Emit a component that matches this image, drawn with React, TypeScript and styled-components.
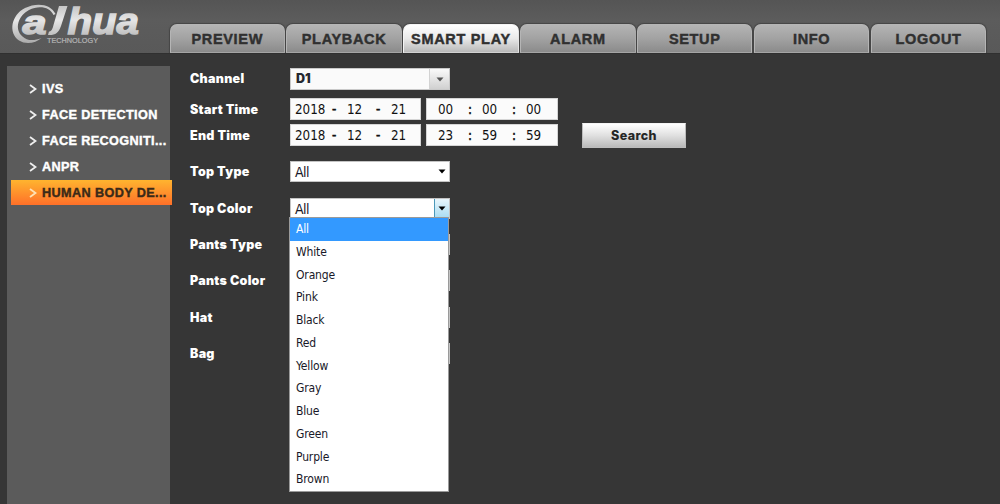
import React from 'react';
import styled, { createGlobalStyle, css } from 'styled-components';

const GlobalStyle = createGlobalStyle`
  * { box-sizing: border-box; }
  body { margin: 0; background: #363636; overflow: hidden; }
`;

const uiFont = css`font-family: 'DejaVu Sans Condensed', 'DejaVu Sans', sans-serif; font-stretch: condensed;`;
const heavyFont = css`font-family: Inter, 'Liberation Sans', sans-serif; font-weight: 900;`;
const boldFont = css`font-family: 'Liberation Sans', sans-serif; font-weight: 700;`;

const Page = styled.div`width: 1000px; height: 504px; overflow: hidden; background: #363636;`;

const Header = styled.header`
  height: 53px;
  display: flex;
  align-items: flex-end;
  background: linear-gradient(#555 0, #5c5c5c 20px, #595959 100%);
`;
const LogoBox = styled.div`width: 169.5px; height: 53px; flex: none;`;
const Tabs = styled.nav`display: flex; gap: 1.5px;`;
const Tab = styled.a<{ $active?: boolean }>`
  ${boldFont}
  width: 115.4px;
  height: 29px;
  padding-top: 1px;
  display: flex;
  align-items: center;
  justify-content: center;
  border-radius: 7px 7px 0 0;
  font-size: 14.5px;
  letter-spacing: 0.68px;
  white-space: nowrap;
  color: #303030;
  -webkit-text-stroke: 0.45px #303030;
  background: ${p => p.$active
    ? 'linear-gradient(#fff, #e9e9e9 50%, #b9b9b9)'
    : 'linear-gradient(#b4b4b4, #a2a2a2 50%, #8b8b8b)'};
  border: 1px solid ${p => (p.$active ? '#f4f4f4' : '#b5b5b5')};
  border-bottom-color: ${p => (p.$active ? '#d2d2d2' : '#a5a5a5')};
  box-shadow: 0 0 1px 1px #454545;
  clip-path: inset(-2px -2px 0 -2px);
`;

const Body = styled.div`display: flex; height: 451px; padding-left: 7px; box-shadow: inset 0 1px #303030;`;
const Sidebar = styled.aside`
  width: 163px;
  margin-top: 13px;
  padding: 10px 0 0 4px;
  flex: none;
  background: #5b5b5b;
`;
const SideItem = styled.div<{ $active?: boolean }>`
  ${boldFont}
  width: 161px;
  height: ${p => (p.$active ? 25 : 26)}px;
  padding: ${p => (p.$active ? 1 : 0)}px 0 0 18px;
  display: flex;
  align-items: center;
  font-size: 12.7px;
  letter-spacing: 0.36px;
  white-space: nowrap;
  color: ${p => (p.$active ? '#3b2a18' : '#fff')};
  -webkit-text-stroke: 0.4px currentColor;
  background: ${p => (p.$active ? 'linear-gradient(#ffb42f, #ff7029)' : 'none')};
  svg { flex: none; margin-right: 5px; }
`;

const Form = styled.main`padding: 14px 0 0 20px;`;
const Row = styled.div<{ $h: number }>`height: ${p => p.$h}px; display: flex; align-items: flex-start;`;
const Label = styled.label`
  ${heavyFont}
  width: 100px;
  padding-top: 1px;
  line-height: 22px;
  font-size: 12.5px;
  letter-spacing: 0.28px;
  color: #fff;
  white-space: nowrap;
`;
const ChannelSelect = styled.div`
  ${heavyFont}
  width: 160px;
  height: 22px;
  margin-top: 1px;
  display: flex;
  border: 1px solid #c9c9c9;
  background: #fafafa;
  color: #252830;
  font-size: 12.5px;
  line-height: 20px;
  padding-left: 5px;
  justify-content: space-between;
`;
const ChannelArrow = styled.span`
  width: 20px;
  display: flex;
  align-items: center;
  justify-content: center;
  border-left: 1px solid #d2d2d2;
  background: linear-gradient(#fafafa, #d0d0d0);
`;
const Field = styled.div<{ $time?: boolean }>`
  ${uiFont}
  width: ${p => (p.$time ? 132 : 131)}px;
  height: 22px;
  margin-right: 5px;
  padding-left: ${p => (p.$time ? 11 : 4)}px;
  display: flex;
  border: 1px solid #d5d5d5;
  background: #fbfbfb;
  color: #111;
  font-size: 13.3px;
  line-height: 22px;
`;
const Part = styled.span<{ $w: number }>`width: ${p => p.$w}px; flex: none;`;
const Separator = styled(Part)`-webkit-text-stroke: 0.5px currentColor;`;
const SearchButton = styled.button`
  ${heavyFont}
  width: 104px;
  height: 25px;
  margin: -1px 0 0 19px;
  padding: 0 0 1px;
  border: 1px solid #bcbcbc;
  border-top-color: #f4f4f4;
  background: linear-gradient(#fff, #e0e0e0 50%, #bababa);
  color: #262626;
  font-size: 12.5px;
  font-weight: 800;
  letter-spacing: 0.4px;
`;
const Select = styled.div`
  ${uiFont}
  position: relative;
  width: 160px;
  height: 21px;
  margin-top: 1px;
  padding-left: 4px;
  display: flex;
  justify-content: space-between;
  border: 1px solid #c4c4c4;
  background: #fff;
  color: #181828;
  font-size: 14px;
  letter-spacing: -0.5px;
  line-height: 20px;
`;
const Arrow = styled.span<{ $open?: boolean }>`
  width: 15px;
  margin-left: auto;
  display: flex;
  align-items: center;
  justify-content: center;
  ${p => p.$open && css`border-left: 1px solid #4b98b9; background: linear-gradient(#e9f6fc, #a8dcf2);`}
`;
const Menu = styled.ul`
  position: absolute;
  z-index: 2;
  top: 18px;
  left: -2px;
  width: 160px;
  height: 275px;
  margin: 0;
  padding: 0;
  border: 1px solid #9a9a9a;
  background: #fff;
  list-style: none;
`;
const Option = styled.li<{ $selected?: boolean }>`
  height: 22.75px;
  padding-left: 6px;
  line-height: 23.2px;
  font-size: 12px;
  letter-spacing: -0.15px;
  color: ${p => (p.$selected ? '#fff' : '#181828')};
  background: ${p => (p.$selected ? '#3399ff' : 'none')};
`;

const Chevron = ({ active }: { active?: boolean }) => (
  <svg width="8" height="10" viewBox="0 0 8 10">
    <path d="M1 1L6.5 5L1 9" fill="none" stroke={active ? '#ffe2b4' : '#eee'} strokeWidth="1.8" />
  </svg>
);
const Triangle = ({ color = '#000' }: { color?: string }) => (
  <svg width="8" height="5" viewBox="0 0 8 5"><path d="M0.5 0.5H7.5L4 4.5Z" fill={color} /></svg>
);

const Logo = () => (
  <svg width="169" height="53" viewBox="0 0 169 53">
    <defs>
      <linearGradient id="metal" gradientUnits="userSpaceOnUse" x1="0" y1="5" x2="0" y2="43">
        <stop offset="0" stopColor="#c4c4c4" />
        <stop offset="0.4" stopColor="#e6e6e6" />
        <stop offset="1" stopColor="#ababab" />
      </linearGradient>
    </defs>
    <path fill="url(#metal)" d="M55.5 14C51 4 37 2 25 8C11 15 8 33 19 40.5C26 45 36 43 41.5 38C34 41 27 41 22.5 36.5C14 29 18 16 29 10C39 5 50 7 53.5 15Z" />
    <path fill="url(#metal)" d="M59 6H67.5L61 26C58.500 33 55 35.5 48 35L49 31.5C51.5 31.5 52.5 29 53.5 25Z" />
    <g fill="url(#metal)" stroke="url(#metal)" strokeWidth="1.4" fontFamily="'Liberation Sans', sans-serif" fontWeight="700" fontStyle="italic">
      <text x="22.5" y="34" fontSize="34" textLength="24" lengthAdjust="spacingAndGlyphs">a</text>
      <text x="67.5" y="33.5" fontSize="36" textLength="71.5" lengthAdjust="spacingAndGlyphs">hua</text>
    </g>
    <text x="47" y="43" fontSize="7.2" fill="#b4b4b4" stroke="#b4b4b4" strokeWidth="0.2" fontFamily="'Liberation Sans', sans-serif" textLength="51" lengthAdjust="spacingAndGlyphs">TECHNOLOGY</text>
  </svg>
);

const tabs = ['PREVIEW', 'PLAYBACK', 'SMART PLAY', 'ALARM', 'SETUP', 'INFO', 'LOGOUT'];
const sections = ['IVS', 'FACE DETECTION', 'FACE RECOGNITI...', 'ANPR', 'HUMAN BODY DE...'];
const colors = ['All', 'White', 'Orange', 'Pink', 'Black', 'Red', 'Yellow', 'Gray', 'Blue', 'Green', 'Purple', 'Brown'];

const DateField = () => (
  <Field>
    <Part $w={37}>2018</Part><Separator $w={15}>-</Separator><Part $w={29}>12</Part><Separator $w={15}>-</Separator><Part $w={20}>21</Part>
  </Field>
);
const TimeField = ({ value }: { value: [string, string, string] }) => (
  <Field $time>
    <Part $w={30}>{value[0]}</Part><Separator $w={14}>:</Separator><Part $w={30}>{value[1]}</Part><Separator $w={14}>:</Separator><Part $w={20}>{value[2]}</Part>
  </Field>
);

export default function App() {
  return (
    <Page>
      <GlobalStyle />
      <Header>
        <LogoBox><Logo /></LogoBox>
        <Tabs>{tabs.map(t => <Tab key={t} $active={t === 'SMART PLAY'}>{t}</Tab>)}</Tabs>
      </Header>
      <Body>
        <Sidebar>
          {sections.map((s, i) => (
            <SideItem key={s} $active={i === 4}><Chevron active={i === 4} />{s}</SideItem>
          ))}
        </Sidebar>
        <Form>
          <Row $h={31}>
            <Label>Channel</Label>
            <ChannelSelect>D1<ChannelArrow><Triangle color="#555" /></ChannelArrow></ChannelSelect>
          </Row>
          <Row $h={26}><Label>Start Time</Label><DateField /><TimeField value={['00', '00', '00']} /></Row>
          <Row $h={36}>
            <Label>End Time</Label><DateField /><TimeField value={['23', '59', '59']} />
            <SearchButton>Search</SearchButton>
          </Row>
          <Row $h={37}><Label>Top Type</Label><Select>All<Arrow><Triangle /></Arrow></Select></Row>
          <Row $h={36}>
            <Label>Top Color</Label>
            <Select>
              All<Arrow $open><Triangle /></Arrow>
              <Menu>{colors.map(c => <Option key={c} $selected={c === 'All'}>{c}</Option>)}</Menu>
            </Select>
          </Row>
          {['Pants Type', 'Pants Color', 'Hat', 'Bag'].map(l => (
            <Row key={l} $h={36.4}><Label>{l}</Label><Select><Arrow><Triangle /></Arrow></Select></Row>
          ))}
        </Form>
      </Body>
    </Page>
  );
}
